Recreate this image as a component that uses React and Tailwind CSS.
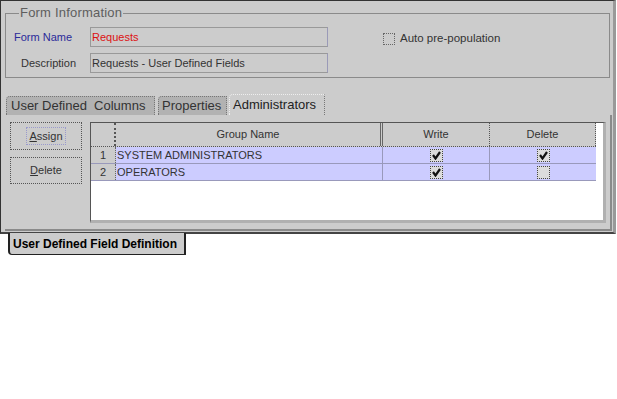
import React from 'react';

const Check = ({ checked }) => (
  <div className="w-[13px] h-[13px] border border-dotted border-[#444] bg-[#dcdcdc] flex items-center justify-center">
    {checked && (
      <svg width="9" height="9" viewBox="0 0 9 9">
        <path d="M1 4 L3.5 7.5 L8 1" fill="none" stroke="#111" strokeWidth="2.2" />
      </svg>
    )}
  </div>
);

const rows = [
  { n: 1, name: 'SYSTEM ADMINISTRATORS', write: true, del: true },
  { n: 2, name: 'OPERATORS', write: true, del: false },
];

const App = () => {
  return (
    <div className="w-[617px] h-[399px] bg-white font-['Liberation_Sans',Arial,sans-serif] text-[11px] text-[#333]">
      <div className="w-[616px] h-[234px] bg-[#cccccc] border-t border-l border-[#333] border-r-[3px] border-r-[#999] border-b-2 border-b-[#444] flex flex-col">
        <fieldset className="ml-[4px] mr-[3px] mt-[5px] h-[72px] border border-[#8a8a8a] pl-[8px]">
          <legend className="ml-[5px] px-[1px] text-[13px] leading-[14px] text-[#5e5e5e] tracking-[0.2px]">
            Form Information
          </legend>
          <div className="flex items-center mt-[7px] h-[20px]">
            <div className="w-[76px] text-[#2a2a9a]">Form Name</div>
            <div className="w-[238px] h-[20px] border border-[#999] border-r-[#9a9ab8] flex items-center pl-[1px] text-[#dd1111]">
              Requests
            </div>
            <div className="ml-[55px] mt-[4px] w-[12px] h-[12px] border border-dotted border-[#666]"></div>
            <div className="ml-[5px] mt-[4px] text-[11.5px]">Auto pre-population</div>
          </div>
          <div className="flex items-center mt-[6px] h-[20px]">
            <div className="w-[76px] pl-[7px]">Description</div>
            <div className="w-[238px] h-[20px] border border-[#999] border-r-[#9a9ab8] flex items-center pl-[1px]">
              Requests - User Defined Fields
            </div>
          </div>
        </fieldset>

        <div className="flex items-end ml-[5px] mt-[16px] h-[21px] text-[13px]">
          <div className="w-[149px] h-[19px] bg-[#b2b2b2] border border-b-0 border-dotted border-[#777] rounded-tl-[4px] pl-[4px] leading-[18px]">
            User Defined&nbsp; Columns
          </div>
          <div className="ml-[3px] w-[69px] h-[19px] bg-[#b2b2b2] border border-b-0 border-dotted border-[#777] rounded-tl-[4px] pl-[3px] leading-[18px]">
            Properties
          </div>
          <div className="ml-[2px] w-[96px] h-[21px] bg-[#cccccc] border-t border-l border-dotted border-[#eee] border-r border-r-[#777] rounded-tl-[4px] pl-[3px] leading-[20px] text-[#222]">
            Administrators
          </div>
        </div>

        <div className="ml-[4px] w-[607px] h-[116px] border-r-2 border-b-2 border-[#8a8a8a] flex pt-[7px] pl-[5px]">
          <div className="w-[72px] flex flex-col">
            <div className="h-[28px] border border-dotted border-[#555] flex items-center justify-center">
              <span className="px-[2px] border border-dotted border-[#9999cc]">
                <span className="underline">A</span>ssign
              </span>
            </div>
            <div className="mt-[7px] h-[27px] border border-dotted border-[#555] flex items-center justify-center">
              <span>
                <span className="underline">D</span>elete
              </span>
            </div>
          </div>

          <div className="ml-[8px] w-[516px] h-[101px] bg-white border-l border-t border-[#555] border-r-[3px] border-r-[#b0b0b0] border-b-[3px] border-b-[#b0b0b0]">
            <div className="flex h-[24px] bg-[#cccccc] border-b border-dotted border-[#555] w-[505px]">
              <div className="w-[25px] border-r-[2px] border-dotted border-[#555]"></div>
              <div className="w-[267px] border-r-[3px] border-double border-[#666] flex items-center justify-center">Group Name</div>
              <div className="w-[107px] border-r border-dotted border-[#555] flex items-center justify-center">Write</div>
              <div className="w-[106px] border-r border-dotted border-[#555] flex items-center justify-center">Delete</div>
            </div>
            {rows.map((r) => (
              <div key={r.n} className="flex h-[17px] w-[505px] border-b border-[#9999bb] bg-[#ccccff]">
                <div className="w-[25px] bg-[#cccccc] border-r border-dotted border-[#666] flex items-center justify-center">{r.n}</div>
                <div className="w-[267px] border-r border-[#9999bb] flex items-center pl-[1px]">{r.name}</div>
                <div className="w-[107px] border-r border-[#9999bb] flex items-center justify-center">
                  <Check checked={r.write} />
                </div>
                <div className="w-[106px] flex items-center justify-center">
                  <Check checked={r.del} />
                </div>
              </div>
            ))}
          </div>
        </div>
      </div>

      <div className="ml-[8px] -mt-[1px] w-[178px] h-[22px] bg-[#cccccc] border-l-2 border-r-2 border-b border-[#222] rounded-bl-[4px] pl-[3px] flex items-center text-[12px] font-bold text-black">
        User Defined Field Definition
      </div>
    </div>
  );
};

export default App;
